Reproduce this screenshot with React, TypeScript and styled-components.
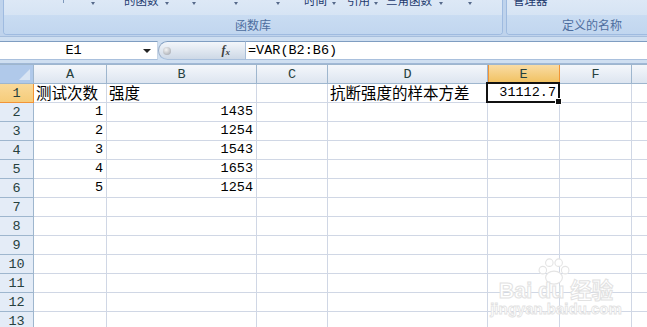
import React from 'react';
import styled, { createGlobalStyle, css } from 'styled-components';

const GlobalStyle = createGlobalStyle`
	html, body {
		margin: 0;
		padding: 0;
		background: #ffffff;
	}
	body {
		font-family: "Noto Sans CJK SC", "Noto Sans", sans-serif;
	}
`

const MONO = `"Liberation Mono", "Noto Sans CJK SC", monospace`;
const CJK = `"Noto Sans CJK SC", "Noto Sans", sans-serif`;

const COLUMNS = [
	{ key: 'A', width: 73 },
	{ key: 'B', width: 150 },
	{ key: 'C', width: 71 },
	{ key: 'D', width: 160 },
	{ key: 'E', width: 72 },
	{ key: 'F', width: 72 },
	{ key: 'G', width: 72 },
];

type CellData = { text: string; align?: 'left' | 'right'; cjk?: boolean; selected?: boolean };

const DATA: Record<number, Record<string, CellData>> = {
	1: {
		A: { text: '测试次数', cjk: true },
		B: { text: '强度', cjk: true },
		D: { text: '抗断强度的样本方差', cjk: true },
		E: { text: '31112.7', align: 'right', selected: true },
	},
	2: { A: { text: '1', align: 'right' }, B: { text: '1435', align: 'right' } },
	3: { A: { text: '2', align: 'right' }, B: { text: '1254', align: 'right' } },
	4: { A: { text: '3', align: 'right' }, B: { text: '1543', align: 'right' } },
	5: { A: { text: '4', align: 'right' }, B: { text: '1653', align: 'right' } },
	6: { A: { text: '5', align: 'right' }, B: { text: '1254', align: 'right' } },
};

const ROW_COUNT = 13;

// ribbon buttons cut off by the top edge: x = where the slot starts, width = up to the arrow's end
const GROUP_LEFT = 4;
const TICK_END = 64;
const RIBBON_ITEMS = [
	{ x: 91, width: 5, label: '' },
	{ x: 124, width: 45, label: '的函数' },
	{ x: 192, width: 5, label: '' },
	{ x: 234, width: 5, label: '' },
	{ x: 276, width: 5, label: '' },
	{ x: 304, width: 32, label: '时间' },
	{ x: 347, width: 31, label: '引用' },
	{ x: 386, width: 57, label: '三角函数' },
	{ x: 468, width: 5, label: '' },
];

const App: React.FC = (): JSX.Element => {
	let prevEnd = TICK_END;
	return (
		<>
			<GlobalStyle />
			<Screen>
				<Ribbon>
					<RibbonGroup width={500}>
						<GroupBody>
							<Tick offset={TICK_END - 1 - GROUP_LEFT} />
							{RIBBON_ITEMS.map((item, i) => {
								const offset = item.x - prevEnd;
								prevEnd = item.x + item.width;
								return (
									<RibbonButton key={i} offset={offset} width={item.width}>
										{item.label && <span>{item.label}</span>}
										<DropArrow />
									</RibbonButton>
								);
							})}
						</GroupBody>
						<GroupLabel>函数库</GroupLabel>
					</RibbonGroup>
					<RibbonGroup width={180}>
						<GroupBody>
							<RibbonButton offset={6}>管理器</RibbonButton>
						</GroupBody>
						<GroupLabel align="left">定义的名称</GroupLabel>
					</RibbonGroup>
				</Ribbon>

				<FormulaBar>
					<NameBox>
						<NameText>E1</NameText>
						<NameArrow />
					</NameBox>
					<FxButton>
						<FxDot />
						<FxLabel>f<sub>x</sub></FxLabel>
					</FxButton>
					<FormulaInput>=VAR(B2:B6)</FormulaInput>
				</FormulaBar>

				<Sheet>
					<CornerCell />
					{COLUMNS.map((col) => (
						<ColumnHeader key={col.key} active={col.key === 'E'}>{col.key}</ColumnHeader>
					))}
					{Array.from({ length: ROW_COUNT }, (_, r) => {
						const row = r + 1;
						return (
							<React.Fragment key={row}>
								<RowHeader active={row === 1}>{row}</RowHeader>
								{COLUMNS.map((col) => {
									const cell = DATA[row]?.[col.key];
									return (
										<Cell
											key={col.key}
											align={cell?.align ?? 'left'}
											cjk={cell?.cjk}
											selected={cell?.selected}
										>
											{cell?.text}
										</Cell>
									);
								})}
							</React.Fragment>
						);
					})}
				</Sheet>

				<Watermark>
					<PawIcon viewBox="0 0 40 30">
						<ellipse cx="20" cy="21" rx="9" ry="7" />
						<circle cx="8" cy="13" r="4" />
						<circle cx="15" cy="5" r="4" />
						<circle cx="25" cy="5" r="4" />
						<circle cx="32" cy="13" r="4" />
					</PawIcon>
					<WatermarkTitle>Bai du 经验</WatermarkTitle>
					<WatermarkUrl>jingyan.baidu.com</WatermarkUrl>
				</Watermark>
			</Screen>
		</>
	);
}

const Screen = styled.div`
	position: relative;
	width: 647px;
	height: 327px;
	overflow: hidden;
	background: #ffffff;
`

const Ribbon = styled.div`
	height: 36px;
	display: flex;
	gap: 3px;
	padding-left: 3px;
	background: #bfd3ec;
	overflow: hidden;
`

const RibbonGroup = styled.div<{ width: number }>`
	flex: 0 0 ${(p) => p.width}px;
	height: 35px;
	box-sizing: border-box;
	display: flex;
	flex-direction: column;
	border: 1px solid #9fbbe0;
	border-top: none;
	border-radius: 0 0 4px 4px;
	overflow: hidden;
	background: #c6daf1;
`

const GroupBody = styled.div`
	height: 15px;
	display: flex;
	align-items: flex-start;
	background: linear-gradient(#dde8f6, #d6e4f4);
	overflow: hidden;
`

const Tick = styled.div<{ offset: number }>`
	margin-left: ${(p) => p.offset}px;
	width: 1px;
	height: 3px;
	background: #7e98bb;
`

const RibbonButton = styled.div<{ offset: number; width?: number }>`
	margin-left: ${(p) => p.offset}px;
	margin-top: -6px;
	${(p) => p.width !== undefined && css`
		flex: 0 0 ${p.width}px;
	`}
	height: 13px;
	display: flex;
	align-items: center;
	justify-content: space-between;
	font-family: ${CJK};
	font-size: 11.5px;
	line-height: 13px;
	color: #1e3a6e;
	white-space: nowrap;
`

const DropArrow = styled.span`
	flex: 0 0 auto;
	width: 0;
	height: 0;
	margin-top: 6px;
	border-left: 2.5px solid transparent;
	border-right: 2.5px solid transparent;
	border-top: 3px solid #56698a;
`

const GroupLabel = styled.div<{ align?: 'left' | 'center' }>`
	height: 19px;
	display: flex;
	align-items: center;
	justify-content: ${(p) => (p.align === 'left' ? 'flex-start' : 'center')};
	padding-left: ${(p) => (p.align === 'left' ? '55px' : '0')};
	font-family: ${CJK};
	font-size: 12px;
	color: #4e6e9f;
	background: linear-gradient(#c9dcf2, #c1d6ef);
`

const FormulaBar = styled.div`
	height: 28px;
	box-sizing: border-box;
	display: flex;
	padding-top: 4px;
	padding-bottom: 3px;
	background: #cfdff1;
	border-top: 1px solid #a6bedd;
	border-bottom: 1px solid #a0b8d6;
	& > * {
		border-top: 1px solid #7f9dc1;
		border-bottom: 1px solid #a9c0dd;
	}
`

const NameBox = styled.div`
	width: 158px;
	box-sizing: border-box;
	display: flex;
	align-items: center;
	background: #ffffff;
	border-right: 1px solid #c8d5e5;
`

const NameText = styled.span`
	flex: 1;
	text-align: center;
	padding-left: 4px;
	font-family: ${MONO};
	font-size: 13.5px;
	color: #000000;
`

const NameArrow = styled.span`
	width: 0;
	height: 0;
	margin-right: 6px;
	border-left: 4px solid transparent;
	border-right: 4px solid transparent;
	border-top: 4px solid #222222;
`

const FxButton = styled.div`
	width: 87px;
	box-sizing: border-box;
	display: flex;
	align-items: center;
	justify-content: space-between;
	padding: 0 15px 0 4px;
	border-radius: 10px 0 0 10px;
	border-left: 1px solid #9aaec8;
	background: linear-gradient(#f3f6fa, #cdd8e6);
`

const FxDot = styled.span`
	width: 8px;
	height: 8px;
	border-radius: 50%;
	background: radial-gradient(circle at 40% 35%, #f4f4f4, #9a9fa8);
`

const FxLabel = styled.span`
	font-family: "Liberation Serif", serif;
	font-style: italic;
	font-weight: bold;
	font-size: 12px;
	color: #3d3d3d;
	sub {
		font-size: 9px;
		vertical-align: -1px;
	}
`

const FormulaInput = styled.div`
	flex: 1;
	display: flex;
	align-items: center;
	padding-left: 2px;
	background: #ffffff;
	border-left: 1px solid #a9bdd6;
	font-family: ${MONO};
	font-size: 13.5px;
	color: #000000;
`

const Sheet = styled.div`
	display: grid;
	grid-template-columns: 34px ${COLUMNS.map((c) => `${c.width}px`).join(' ')};
	grid-auto-rows: 19px;
	border-top: 1px solid #9eb6ce;
`

const headerBase = css`
	box-sizing: border-box;
	display: flex;
	align-items: center;
	justify-content: center;
	font-family: ${MONO};
	font-size: 13.5px;
	color: #27413e;
	border-right: 1px solid #9eb6ce;
	border-bottom: 1px solid #9eb6ce;
`

const CornerCell = styled.div`
	${headerBase};
	background: #b0c9ea;
	position: relative;
	&::after {
		content: '';
		position: absolute;
		right: 3px;
		bottom: 3px;
		width: 11px;
		height: 11px;
		background: #d8e4f3;
		clip-path: polygon(100% 0, 100% 100%, 0 100%);
	}
`

const ColumnHeader = styled.div<{ active?: boolean }>`
	${headerBase};
	background: ${(p) =>
		p.active
			? 'linear-gradient(#f9dca4, #f1c15f)'
			: 'linear-gradient(#f4f7fb, #dde5f0)'};
	${(p) => p.active && css`
		border-right-color: #f29436;
		border-bottom-color: #f29436;
		box-shadow: inset 1px 0 0 #f29436;
	`}
`

const RowHeader = styled.div<{ active?: boolean }>`
	${headerBase};
	background: ${(p) => (p.active ? 'linear-gradient(#f9d99a, #f6cc7a)' : '#e4ecf7')};
	${(p) => p.active && css`
		border-right-color: #f29436;
		border-bottom-color: #f29436;
	`}
`

const Cell = styled.div<{ align: 'left' | 'right'; cjk?: boolean; selected?: boolean }>`
	box-sizing: border-box;
	position: relative;
	display: flex;
	align-items: flex-end;
	justify-content: ${(p) => (p.align === 'right' ? 'flex-end' : 'flex-start')};
	padding: 0 3px 1px 2px;
	white-space: nowrap;
	overflow: visible;
	font-family: ${(p) => (p.cjk ? CJK : MONO)};
	font-size: ${(p) => (p.cjk ? '15.5px' : '13.5px')};
	line-height: 17px;
	color: #000000;
	border-right: 1px solid #d0d7e5;
	border-bottom: 1px solid #d0d7e5;
	${(p) => p.selected && css`
		z-index: 2;
		&::after {
			content: '';
			position: absolute;
			left: -2px;
			top: -2px;
			right: -1px;
			bottom: -1px;
			border: 2px solid #111111;
		}
		&::before {
			content: '';
			position: absolute;
			right: -3px;
			bottom: -3px;
			width: 5px;
			height: 5px;
			background: #111111;
			border: 1px solid #ffffff;
			z-index: 3;
		}
	`}
`

const Watermark = styled.div`
	position: absolute;
	left: 497px;
	top: 258px;
	width: 118px;
	display: flex;
	flex-direction: column;
	align-items: center;
	pointer-events: none;
`

const PawIcon = styled.svg`
	position: absolute;
	left: 38px;
	top: 0;
	width: 38px;
	height: 28px;
	fill: #ffffff;
	stroke: #e4e4e4;
	stroke-width: 1.2;
`

const WatermarkTitle = styled.div`
	position: relative;
	margin-top: 22px;
	font-family: "Liberation Sans", "Noto Sans CJK SC", sans-serif;
	font-size: 21.5px;
	font-weight: bold;
	line-height: 22px;
	color: #ffffff;
	-webkit-text-stroke: 1px #e2e2e2;
`

const WatermarkUrl = styled.div`
	margin-top: 0;
	font-family: "Liberation Sans", sans-serif;
	font-size: 15px;
	font-weight: bold;
	line-height: 14px;
	color: #ffffff;
	-webkit-text-stroke: 0.8px #e2e2e2;
`

export default App;
